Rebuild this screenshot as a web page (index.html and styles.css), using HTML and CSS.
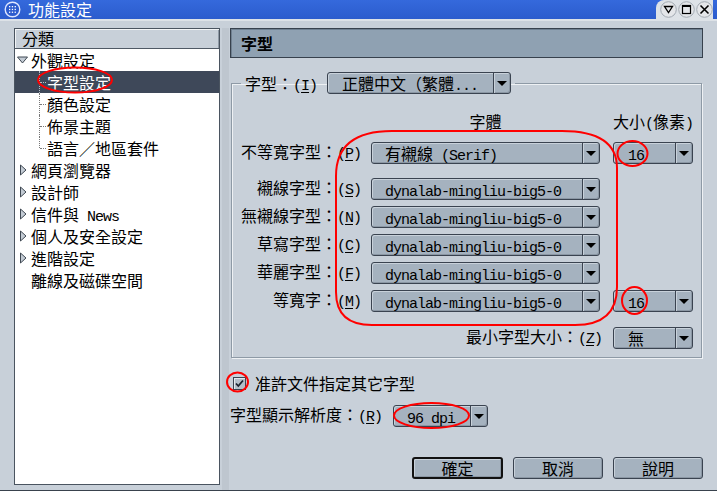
FILE: index.html
```html
<!DOCTYPE html>
<html lang="zh-Hant">
<head>
<meta charset="utf-8">
<title>功能設定</title>
<link rel="stylesheet" href="styles.css">
</head>
<body>
<div class="window">
  <div class="titlebar">
    <svg class="appicon" width="17" height="17" viewBox="0 0 17 17">
      <circle cx="8.5" cy="8.5" r="7.3" fill="#2c5ccf" stroke="#dfe7ff" stroke-width="1.4"/>
      <g fill="#ffffff">
        <rect x="5" y="5" width="1.3" height="1.3"/><rect x="7.8" y="5" width="1.3" height="1.3"/><rect x="10.6" y="5" width="1.3" height="1.3"/>
        <rect x="5" y="7.8" width="1.3" height="1.3"/><rect x="7.8" y="7.8" width="1.3" height="1.3"/><rect x="10.6" y="7.8" width="1.3" height="1.3"/>
        <rect x="5" y="10.6" width="1.3" height="1.3"/><rect x="7.8" y="10.6" width="1.3" height="1.3"/><rect x="10.6" y="10.6" width="1.3" height="1.3"/>
      </g>
    </svg>
    <span class="title">功能設定</span>
    <div class="wbtns">
      <svg width="17" height="17" viewBox="0 0 17 17"><circle cx="8.5" cy="8.5" r="7.8" fill="#e4e6e9" stroke="#a3aab2"/><path d="M4.5 5.5 H12.5 L8.5 11.5 Z" fill="none" stroke="#000" stroke-width="1.3"/></svg>
      <svg width="17" height="17" viewBox="0 0 17 17"><circle cx="8.5" cy="8.5" r="7.8" fill="#e4e6e9" stroke="#a3aab2"/><rect x="4.5" y="4.5" width="8" height="8" fill="none" stroke="#000" stroke-width="1.2"/><rect x="4" y="4" width="9" height="2" fill="#000"/></svg>
      <svg width="17" height="17" viewBox="0 0 17 17"><circle cx="8.5" cy="8.5" r="7.8" fill="#e4e6e9" stroke="#a3aab2"/><path d="M4.5 4.5 L12.5 12.5 M12.5 4.5 L4.5 12.5" stroke="#000" stroke-width="1.6"/></svg>
    </div>
  </div>

  <div class="content">
    <div class="sidebar">
      <div class="side-head">分類</div>
      <ul class="tree">
        <li class="parent"><svg class="tri" width="16" height="22" viewBox="0 0 16 22"><polygon points="2.5,8 12.5,8 7.5,14" fill="#c3cbd4" stroke="#3f4852"/></svg>外觀設定</li>
        <li class="child sel">字型設定</li>
        <li class="child">顏色設定</li>
        <li class="child">佈景主題</li>
        <li class="child last">語言／地區套件</li>
        <li class="parent"><svg class="tri" width="16" height="22" viewBox="0 0 16 22"><polygon points="5.5,6 11,11 5.5,16" fill="#c3cbd4" stroke="#3f4852"/></svg>網頁瀏覽器</li>
        <li class="parent"><svg class="tri" width="16" height="22" viewBox="0 0 16 22"><polygon points="5.5,6 11,11 5.5,16" fill="#c3cbd4" stroke="#3f4852"/></svg>設計師</li>
        <li class="parent"><svg class="tri" width="16" height="22" viewBox="0 0 16 22"><polygon points="5.5,6 11,11 5.5,16" fill="#c3cbd4" stroke="#3f4852"/></svg>信件與<span class="lat"> News</span></li>
        <li class="parent"><svg class="tri" width="16" height="22" viewBox="0 0 16 22"><polygon points="5.5,6 11,11 5.5,16" fill="#c3cbd4" stroke="#3f4852"/></svg>個人及安全設定</li>
        <li class="parent"><svg class="tri" width="16" height="22" viewBox="0 0 16 22"><polygon points="5.5,6 11,11 5.5,16" fill="#c3cbd4" stroke="#3f4852"/></svg>進階設定</li>
        <li class="parent leaf">離線及磁碟空間</li>
      </ul>
    </div>

    <div class="splitter"></div>

    <div class="main">
      <div class="pane-head">字型</div>

      <fieldset class="group">
        <legend><span>字型：<span class="lat">(<u>I</u>)</span></span>
          <span class="combo lang"><span class="val">正體中文（繁體<span class="lat">...</span></span><span class="arr"></span></span>
        </legend>

        <div class="colhead">
          <span class="h-font">字體</span>
          <span class="h-size">大小<span class="lat">(</span>像素<span class="lat">)</span></span>
        </div>

        <div class="frow first">
          <span class="lbl">不等寬字型：<span class="lat">(<u>P</u>)</span></span>
          <span class="combo wide"><span class="val">有襯線<span class="lat"> (Serif)</span></span><span class="arr"></span></span>
          <span class="combo size"><span class="val"><span class="lat">16</span></span><span class="arr"></span></span>
        </div>
        <div class="frow second">
          <span class="lbl">襯線字型：<span class="lat">(<u>S</u>)</span></span>
          <span class="combo wide"><span class="val"><span class="lat">dynalab-mingliu-big5-0</span></span><span class="arr"></span></span>
        </div>
        <div class="frow">
          <span class="lbl">無襯線字型：<span class="lat">(<u>N</u>)</span></span>
          <span class="combo wide"><span class="val"><span class="lat">dynalab-mingliu-big5-0</span></span><span class="arr"></span></span>
        </div>
        <div class="frow">
          <span class="lbl">草寫字型：<span class="lat">(<u>C</u>)</span></span>
          <span class="combo wide"><span class="val"><span class="lat">dynalab-mingliu-big5-0</span></span><span class="arr"></span></span>
        </div>
        <div class="frow">
          <span class="lbl">華麗字型：<span class="lat">(<u>F</u>)</span></span>
          <span class="combo wide"><span class="val"><span class="lat">dynalab-mingliu-big5-0</span></span><span class="arr"></span></span>
        </div>
        <div class="frow">
          <span class="lbl">等寬字：<span class="lat">(<u>M</u>)</span></span>
          <span class="combo wide"><span class="val"><span class="lat">dynalab-mingliu-big5-0</span></span><span class="arr"></span></span>
          <span class="combo size"><span class="val"><span class="lat">16</span></span><span class="arr"></span></span>
        </div>
        <div class="frow min">
          <span class="lbl long">最小字型大小：<span class="lat">(<u>Z</u>)</span></span>
          <span class="combo size"><span class="val">無</span><span class="arr"></span></span>
        </div>
      </fieldset>

      <div class="check-row">
        <span class="checkbox"><svg width="11" height="11" viewBox="0 0 11 11"><path d="M2 5.5 L4.3 8 L9 2.5" fill="none" stroke="#1d2430" stroke-width="1.8"/></svg></span>
        <span class="check-label">准許文件指定其它字型</span>
      </div>

      <div class="res-row">
        <span class="res-label">字型顯示解析度：<span class="lat">(<u>R</u>)</span></span>
        <span class="combo dpi"><span class="val"><span class="lat">96 dpi</span></span><span class="arr"></span></span>
      </div>

      <div class="btn-row">
        <span class="btn default">確定</span>
        <span class="btn">取消</span>
        <span class="btn">說明</span>
      </div>
    </div>
  </div>

  <svg class="marks" width="717" height="491" viewBox="0 0 717 491">
    <g fill="none" stroke="#ff0000" stroke-width="2">
      <ellipse cx="75" cy="80" rx="37" ry="12.5"/>
      <path d="M392 131 L562 131 Q617 131 617 168 L617 287 Q617 325 575 325 L372 325 Q336 325 336 292 L336 176 Q336 131 392 131 Z"/>
      <ellipse cx="632.5" cy="153.5" rx="15" ry="12.5"/>
      <ellipse cx="634.5" cy="300.5" rx="12.5" ry="13.5"/>
      <ellipse cx="237.5" cy="382" rx="10.5" ry="9.5"/>
      <ellipse cx="431.5" cy="415.5" rx="37.5" ry="12.5"/>
    </g>
  </svg>
</div>
</body>
</html>
```

FILE: styles.css
```css
html, body {
  margin: 0;
  padding: 0;
}
body {
  width: 717px;
  height: 491px;
  overflow: hidden;
  background: #c8d0d9;
  font-family: "Noto Sans CJK TC", "Noto Sans CJK SC", sans-serif;
  font-size: 16px;
  color: #000;
}
.lat {
  font-family: "Liberation Mono", monospace;
  font-size: 15px;
  letter-spacing: -1px;
}
u {
  text-decoration: underline;
  text-underline-offset: 2px;
}

.window {
  position: relative;
  width: 717px;
  height: 490px;
  display: flex;
  flex-direction: column;
  background: #c8d0d9;
  border-bottom: 1px solid #39424d;
}

/* title bar */
.titlebar {
  height: 19px;
  flex: none;
  display: flex;
  align-items: center;
  background: linear-gradient(#3569dc, #2b5ccd);
  color: #fff;
}
.appicon {
  margin-left: 4px;
}
.title {
  margin-left: 7px;
  line-height: 19px;
  font-size: 16px;
  white-space: nowrap;
}
.wbtns {
  margin-left: auto;
  margin-right: 4px;
  display: flex;
  gap: 1px;
  align-self: flex-end;
  padding: 1px 0 1px 4px;
  background: #dde2e7;
  border-top-left-radius: 8px;
  height: 17px;
}

/* content area */
.content {
  flex: 1;
  display: flex;
  padding: 7px 0 0 14px;
  border-top: 2px solid #dde2e7;
}

.sidebar {
  width: 206px;
  height: 457px;
  box-sizing: border-box;
  border: 1px solid #4a5460;
  background: #fff;
  flex: none;
}
.side-head {
  height: 20px;
  box-sizing: border-box;
  background: #c8d0d9;
  border-bottom: 1px solid #4f5965;
  box-shadow: inset 1px 1px 0 #f2f4f6, inset -1px 0 0 #8e99a5;
  padding-left: 7px;
  line-height: 19px;
}
.tree {
  list-style: none;
  margin: 0;
  padding: 0;
}
.tree li {
  height: 22px;
  line-height: 22px;
  white-space: nowrap;
  position: relative;
}
.tree .parent .tri {
  vertical-align: top;
}
.tree .leaf {
  padding-left: 16px;
}
.tree .child {
  padding-left: 32px;
}
.tree .child::before {
  content: "";
  position: absolute;
  left: 24px;
  top: 0;
  bottom: 0;
  border-left: 1px dotted #777;
}
.tree .child.last::before {
  bottom: 11px;
}
.tree .child::after {
  content: "";
  position: absolute;
  left: 25px;
  top: 11px;
  width: 6px;
  border-top: 1px dotted #777;
}
.tree .sel {
  background: #3e4859;
  color: #fff;
}
.tree .sel::before,
.tree .sel::after {
  border-color: #b8c0c8;
}

.splitter {
  width: 10px;
  flex: none;
  display: flex;
  justify-content: center;
}
.splitter::before {
  content: "";
  width: 7px;
  background: #bec6cf;
}

/* main pane */
.main {
  width: 473px;
  flex: none;
  display: flex;
  flex-direction: column;
}
.pane-head {
  height: 30px;
  box-sizing: border-box;
  border: 1px solid #37414d;
  background: #8fa1b2;
  box-shadow: inset 1px 1px 0 #6f8091;
  font-weight: bold;
  padding-left: 10px;
  line-height: 28px;
}

.group {
  margin: 14px 1px 0 1px;
  padding: 17px 0 8px 0;
  border: 1px solid #8e9aa6;
  box-shadow: 1px 1px 0 #eef1f4, inset 1px 1px 0 #eef1f4;
  min-width: 0;
}
.group legend {
  margin-left: 9px;
  padding: 0 4px;
  height: 22px;
  display: flex;
  align-items: center;
  white-space: nowrap;
}
.combo.lang {
  width: 184px;
  margin-left: 10px;
}
.combo.lang .val {
  padding-left: 14px;
}

.colhead {
  height: 20px;
  line-height: 20px;
  display: flex;
  white-space: nowrap;
}
.h-font {
  width: 229px;
  margin-left: 139px;
  text-align: center;
}
.h-size {
  width: 79px;
  margin-left: 13px;
}

.frow {
  display: flex;
  align-items: center;
  height: 22px;
  margin-top: 6px;
}
.frow.first { margin-top: 11px; }
.frow.second { margin-top: 14px; }
.frow.min { margin-top: 15px; }

.lbl {
  width: 129px;
  text-align: right;
  white-space: nowrap;
  line-height: 22px;
}
.lbl.long {
  width: 370px;
}

.combo {
  height: 22px;
  box-sizing: border-box;
  display: flex;
  border: 1px solid #3a4350;
  border-radius: 3px;
  background: #a5b2bf;
  box-shadow: inset 1px 1px 0 #c8d1da, inset -1px -1px 0 #8b97a4;
  flex: none;
}
.combo .val {
  flex: 1;
  padding-left: 13px;
  line-height: 20px;
  white-space: nowrap;
}
.combo .arr {
  width: 16px;
  border-left: 1px solid #3a4350;
  box-shadow: inset 1px 0 0 #c8d1da;
  display: flex;
  align-items: center;
  justify-content: center;
}
.combo .arr::after {
  content: "";
  border-left: 5px solid transparent;
  border-right: 5px solid transparent;
  border-top: 5px solid #000;
}
.combo.wide {
  width: 229px;
  margin-left: 10px;
}
.combo.size {
  width: 80px;
  margin-left: 13px;
}
.frow.min .combo.size {
  margin-left: 11px;
}
.combo.size .val {
  padding-left: 14px;
}

.check-row {
  display: flex;
  align-items: center;
  height: 16px;
  margin-top: 17px;
  padding-left: 3px;
}
.checkbox {
  width: 13px;
  height: 13px;
  box-sizing: border-box;
  border: 1px solid #3a4350;
  background: #b4bfca;
  box-shadow: inset 1px 1px 0 #e4e9ee;
  display: flex;
  align-items: center;
  justify-content: center;
}
.check-label {
  margin-left: 9px;
  line-height: 16px;
}

.res-row {
  display: flex;
  align-items: center;
  height: 22px;
  margin-top: 14px;
}
.res-label {
  white-space: nowrap;
  line-height: 22px;
}
.combo.dpi {
  width: 95px;
  margin-left: 11px;
}

.btn-row {
  display: flex;
  justify-content: flex-end;
  gap: 10px;
  margin-top: 30px;
}
.btn {
  width: 90px;
  height: 22px;
  box-sizing: border-box;
  border: 1px solid #3a4350;
  border-radius: 3px;
  background: #a5b2bf;
  box-shadow: inset 1px 1px 0 #c8d1da, inset -1px -1px 0 #8b97a4;
  text-align: center;
  line-height: 20px;
}
.btn.default {
  width: 91px;
  border: 2px solid #111;
  line-height: 18px;
}

.marks {
  position: absolute;
  left: 0;
  top: 0;
  pointer-events: none;
}
```
